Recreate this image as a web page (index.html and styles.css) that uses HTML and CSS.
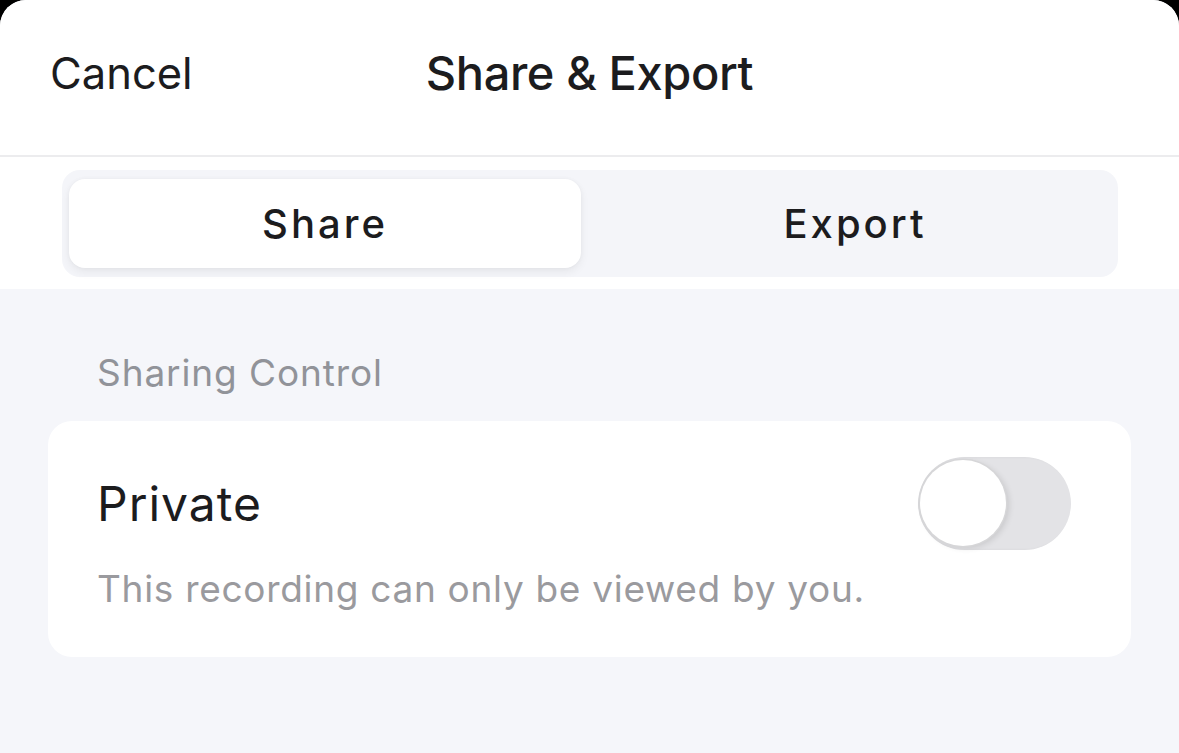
FILE: index.html
```html
<!DOCTYPE html>
<html lang="en">
<head>
<meta charset="utf-8">
<title>Share &amp; Export</title>
<link rel="stylesheet" href="styles.css">
</head>
<body>
<div class="sheet">
  <header class="header">
    <div class="cancel">Cancel</div>
    <div class="title">Share &amp; Export</div>
    <div class="spacer"></div>
  </header>
  <div class="tabs-wrap">
    <div class="seg">
      <div class="tab active">Share</div>
      <div class="tab">Export</div>
    </div>
  </div>
  <main class="content">
    <div class="section-label">Sharing Control</div>
    <div class="card">
      <div class="row">
        <div class="row-title">Private</div>
        <div class="toggle"><div class="knob"></div></div>
      </div>
      <div class="row-desc">This recording can only be viewed by you.</div>
    </div>
  </main>
</div>
</body>
</html>
```

FILE: styles.css
```css
html, body {
  margin: 0;
  padding: 0;
  background: #000;
}
body {
  font-family: Inter, "Noto Sans", "Liberation Sans", sans-serif;
  color: #1c1c1e;
}
.sheet {
  height: 753px;
  background: #f5f6fa;
  border-radius: 26px 26px 0 0;
  overflow: hidden;
}
.header {
  height: 157px;
  box-sizing: border-box;
  background: #fff;
  border-bottom: 2px solid #ececee;
  display: grid;
  grid-template-columns: 1fr auto 1fr;
  align-items: center;
  padding-bottom: 10px;
}
.cancel {
  padding-left: 50px;
  font-size: 43.5px;
  font-weight: 400;
  color: #1c1c1e;
}
.title {
  font-size: 47px;
  font-weight: 500;
  letter-spacing: -0.4px;
  color: #1c1c1e;
}
.tabs-wrap {
  background: #fff;
  padding: 13px 61px 12px 62px;
}
.seg {
  background: #f4f5f9;
  border-radius: 18px;
  padding: 9px 7px;
  display: grid;
  grid-template-columns: 1fr 1fr;
  gap: 18px;
}
.tab {
  height: 89px;
  display: flex;
  align-items: center;
  justify-content: center;
  font-size: 40px;
  font-weight: 500;
  letter-spacing: 3px;
  color: #1c1c1e;
  border-radius: 16px;
}
.tab.active {
  background: #fff;
  box-shadow: 0 4px 10px rgba(0, 0, 0, 0.06), 0 0 4px rgba(0, 0, 0, 0.04);
}
.content {
  padding: 0 48px;
}
.section-label {
  padding: 62px 0 0 49px;
  height: 70px;
  font-size: 37px;
  color: #919399;
  letter-spacing: 0.9px;
  line-height: 44px;
}
.card {
  background: #fff;
  border-radius: 24px;
  padding: 36px 60px 46px 49px;
}
.row {
  display: flex;
  align-items: center;
  justify-content: space-between;
}
.row-title {
  font-size: 48px;
  font-weight: 400;
  color: #1c1c1e;
  letter-spacing: 1px;
}
.toggle {
  width: 153px;
  height: 93px;
  border-radius: 47px;
  background: #e3e3e6;
  position: relative;
  box-shadow: inset 2px 0 3px rgba(0, 0, 0, 0.06);
}
.knob {
  position: absolute;
  left: 2px;
  top: 3px;
  width: 86px;
  height: 86px;
  border-radius: 50%;
  background: #fff;
  box-shadow: 0 0 0 1.5px #d6d6d8, 3px 2px 6px rgba(0, 0, 0, 0.12);
}
.row-desc {
  margin-top: 16px;
  font-size: 37px;
  color: #9a9a9e;
  letter-spacing: 0.7px;
}
```
